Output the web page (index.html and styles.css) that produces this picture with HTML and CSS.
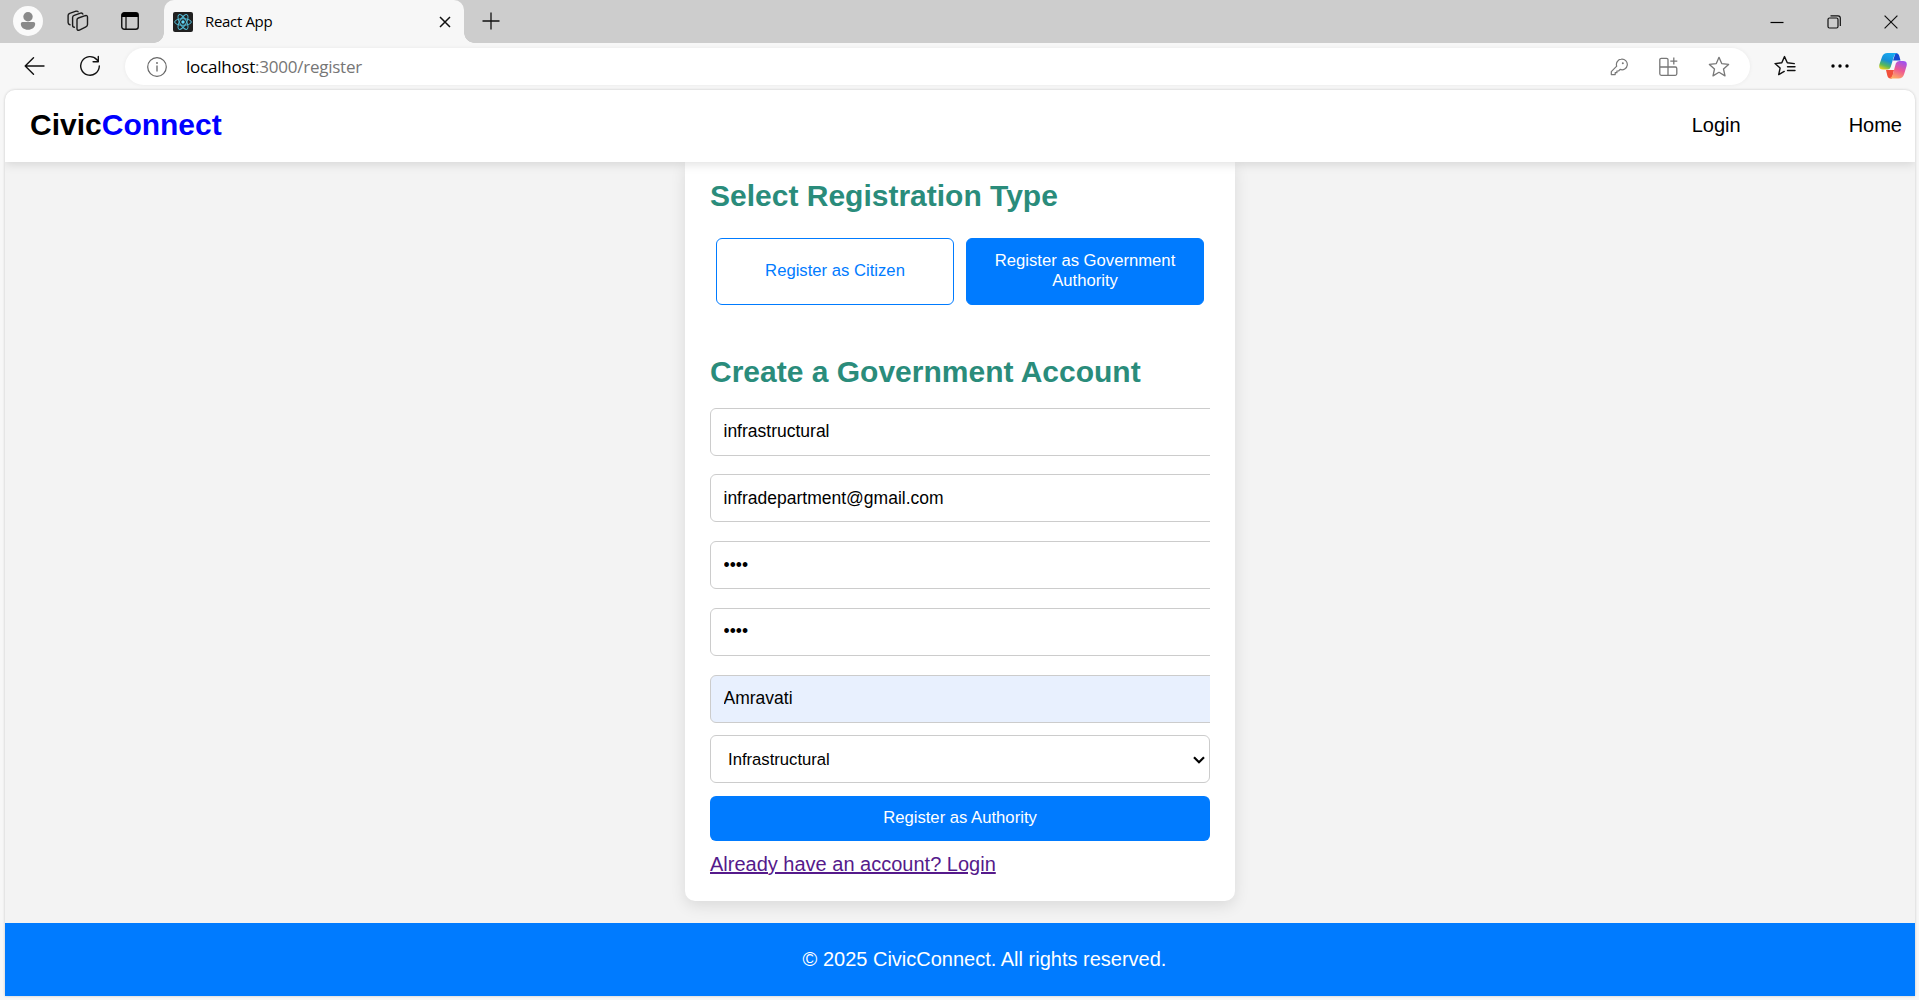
FILE: index.html
```html
<!DOCTYPE html>
<html lang="en">
<head>
<meta charset="utf-8">
<title>React App</title>
<link rel="stylesheet" href="styles.css">
</head>
<body>
<div class="browser">
  <div class="tabstrip">
    <span class="avatar"><svg width="30" height="30" viewBox="0 0 30 30"><circle cx="15" cy="15" r="15" fill="#fafafa"/><circle cx="15" cy="10.8" r="4.7" fill="#8a8a8a"/><path d="M9.600 16h10.800a1.800 1.800 0 0 1 1.800 1.800c0 3.800-3.200 6-7.200 6s-7.200-2.200-7.200-6a1.800 1.800 0 0 1 1.800-1.800z" fill="#8a8a8a"/></svg></span>
    <svg class="workspaces" width="22" height="22" viewBox="0 0 22 22" fill="none" stroke="#1c1c1c" stroke-width="1.400" stroke-linejoin="round" stroke-linecap="round"><path d="M11.400 8l6.800-2.300q2.300-.6 2.300 1.600v7.200q0 1.700-1.600 2.300l-6.500 3.300q-2.400.8-2.400-1.400V9.800q0-1.300 1.400-1.800z"/><path d="M7.400 17.200q-1.800 0-1.800-2V7.600q0-1.600 1.600-2.200l6.300-2.200q1.800-.5 2.300.9M3 14.800q-1.900-.4-1.900-2.200V5.600q0-1.700 1.600-2.300L9 1.200q1.600-.4 2.100.6"/></svg>
    <svg class="tabactions" width="18" height="18" viewBox="0 0 18 18"><rect x=".75" y=".75" width="16.500" height="16.500" rx="2.500" fill="none" stroke="#111" stroke-width="1.400"/><path d="M.7 5V3A2.500 2.500 0 0 1 3.200.5h11.600A2.500 2.500 0 0 1 17.300 3v2z" fill="#000"/><path d="M5 5v12" stroke="#111" stroke-width="1.300"/></svg>
    <div class="tab">
      <svg width="20" height="20" viewBox="0 0 20 20"><rect width="20" height="20" rx="2" fill="#202020"/><g fill="none" stroke="#53b9d3" stroke-width="1"><ellipse cx="10" cy="10" rx="8.300" ry="3.300"/><ellipse cx="10" cy="10" rx="8.300" ry="3.300" transform="rotate(60 10 10)"/><ellipse cx="10" cy="10" rx="8.300" ry="3.300" transform="rotate(120 10 10)"/></g><circle cx="10" cy="10" r="1.700" fill="#61dafb"/></svg>
      <span class="tab-title">React App</span>
      <svg class="tab-close" width="12" height="12" viewBox="0 0 12 12" stroke="#111" stroke-width="1.500"><path d="M1 1l10 10M11 1L1 11"/></svg>
    </div>
    <svg class="newtab" width="18" height="18" viewBox="0 0 18 18" stroke="#111" stroke-width="1.300"><path d="M9 .5v17M.5 9h17"/></svg>
    <div class="window-buttons">
      <svg width="14" height="14" viewBox="0 0 14 14"><path d="M.5 7.500h13" stroke="#000" stroke-width="1.200"/></svg>
      <svg width="14" height="14" viewBox="0 0 14 14" fill="none" stroke="#111" stroke-width="1.200"><rect x="1" y="3" width="10" height="10" rx="1.500"/><path d="M3.500.8H11a2.300 2.300 0 0 1 2.300 2.300V11"/></svg>
      <svg width="14" height="14" viewBox="0 0 14 14" stroke="#111" stroke-width="1.200"><path d="M.6.6l12.800 12.800M13.400.6L.6 13.400"/></svg>
    </div>
  </div>
  <div class="toolbar">
    <svg class="back" width="21" height="18" viewBox="0 0 21 18" fill="none" stroke="#111" stroke-width="1.400" stroke-linecap="round" stroke-linejoin="round"><path d="M20 9H1.200M9.500.8L1.200 9l8.300 8.200"/></svg>
    <svg class="reload" width="22" height="22" viewBox="0 0 22 22" fill="none" stroke="#111" stroke-width="1.400" stroke-linecap="round" stroke-linejoin="round"><path d="M20.300 11A9.300 9.300 0 1 1 17.900 4.700L19.300 6.200M19.300 1.500v5.200h-5.200"/></svg>
    <div class="address">
      <svg width="20" height="20" viewBox="0 0 20 20" fill="none" stroke="#666"><circle cx="10" cy="10" r="9.300" stroke-width="1.200"/><path d="M10 8.500v6" stroke-width="1.300"/><circle cx="10" cy="6" r=".9" fill="#666" stroke="none"/></svg>
      <span class="url"><b>localhost</b>:3000/register</span>
      <div class="address-icons">
        <svg width="18" height="18" viewBox="0 0 18 18" fill="none" stroke="#777" stroke-width="1.200" stroke-linejoin="round"><path d="M11.300 1.200a5.300 5.300 0 1 1-1.200 10.200L8.600 13H6.900v1.700H5.200v1.900H1.300v-2.900l5.400-5.500a5.300 5.300 0 0 1 4.600-7z"/><circle cx="12.800" cy="5.200" r="1" fill="#777" stroke="none"/></svg>
        <svg width="20" height="20" viewBox="0 0 20 20" fill="none" stroke="#777" stroke-width="1.300"><path d="M10 10V2.800a1.500 1.500 0 0 0-1.500-1.500H3.300a1.500 1.500 0 0 0-1.500 1.500V16.800a1.500 1.500 0 0 0 1.500 1.500h14a1.500 1.500 0 0 0 1.500-1.500V11.500A1.500 1.500 0 0 0 17.300 10H1.800M10 10v8.300M15.800.6v7M12.300 4.100h7"/></svg>
        <svg width="22" height="22" viewBox="0 0 22 22" fill="none" stroke="#777" stroke-width="1.300" stroke-linejoin="round"><path d="M11 1.300l2.700 6.300 6.900.8-5.100 4.600 1.500 6.900L11 16.300l-6 3.600 1.500-6.900-5.100-4.600 6.900-.8z"/></svg>
      </div>
    </div>
    <svg class="favorites" width="22" height="22" viewBox="0 0 22 22" fill="none" stroke="#111" stroke-width="1.400" stroke-linejoin="round" stroke-linecap="round"><path d="M20.300 8.600l-7-.8L10.500 1.600 7.800 7.800 1 8.600l5.100 4.500-1.400 6.500 5.500-3.200M13.500 11.700h7.500M13.500 15.500h7.500"/></svg>
    <svg class="more" width="18" height="4" viewBox="0 0 18 4"><circle cx="2" cy="2" r="1.700"/><circle cx="9" cy="2" r="1.700"/><circle cx="16" cy="2" r="1.700"/></svg>
    <svg class="copilot" width="28" height="26" viewBox="0 0 28 26">
      <defs>
        <linearGradient id="cool" x1=".6" y1="0" x2=".2" y2="1"><stop offset="0" stop-color="#18a9f0"/><stop offset=".45" stop-color="#1690d8"/><stop offset=".75" stop-color="#58b95a"/><stop offset="1" stop-color="#f2cf1b"/></linearGradient>
        <linearGradient id="warm" x1=".7" y1="0" x2=".3" y2="1"><stop offset="0" stop-color="#a052ee"/><stop offset=".5" stop-color="#ee5a91"/><stop offset="1" stop-color="#ffad62"/></linearGradient>
      </defs>
      <path d="M16.500 0q3 0 3.800 3l1.200 4.500H14z" fill="#1748cf"/>
      <path d="M7 17h8l-2 8.500h-1.500q-2.500 0-3.200-3z" fill="#f1503b"/>
      <path d="M8.500 0H18q-2.500 1-3.300 4l-3 10q-.8 2.500-3.400 2.500H4Q-.7 16.500.4 11.500L3 4q1.300-4 5.500-4z" fill="url(#cool)"/>
      <path d="M19.500 25.500H10.500q2.500-1 3.300-4l3-11q.8-2.500 3.400-2.500H24q4.700 0 3.600 5L25 21.500q-1.300 4-5.500 4z" fill="url(#warm)"/>
    </svg>
  </div>
  <div class="viewport">
    <header class="site-header">
      <div class="logo">Civic<span>Connect</span></div>
      <nav><a>Login</a><a>Home</a></nav>
    </header>
    <main>
      <section class="card">
        <h2>Select Registration Type</h2>
        <div class="types">
          <button class="type">Register as Citizen</button>
          <button class="type active">Register as Government Authority</button>
        </div>
        <h2 class="form-title">Create a Government Account</h2>
        <form>
          <input type="text" value="infrastructural">
          <input type="text" class="email" value="infradepartment@gmail.com">
          <input type="password" class="password" value="abcd">
          <input type="password" value="abcd">
          <input type="text" class="autofilled" value="Amravati">
          <div class="select"><span>Infrastructural</span><svg width="12" height="8" viewBox="0 0 12 8" fill="none" stroke="#000" stroke-width="2.200"><path d="M1 1.200l5 5 5-5"/></svg></div>
          <button class="submit">Register as Authority</button>
        </form>
        <a class="login-link">Already have an account? Login</a>
      </section>
    </main>
    <footer>© 2025 CivicConnect. All rights reserved.</footer>
  </div>
</div>
</body>
</html>
```
FILE: styles.css
```css
* { box-sizing: border-box; }
body { margin: 0; font: 20px "Liberation Sans", Arial, sans-serif; color: #000; }
svg { display: block; flex: none; }
button, input { font-family: inherit; }

.browser { width: 1919px; height: 1000px; background: #f7f7f7; display: flex; flex-direction: column; overflow: hidden; }

/* Tab strip */
.tabstrip { height: 43px; flex: none; background: #cdcdcd; display: flex; align-items: center; padding-left: 13px; }
.avatar { margin-top: -1px; }
.workspaces { margin: -1px 0 0 24px; }
.tabactions { margin: -1px 0 0 32px; }
.tab { position: relative; width: 300px; height: 43px; margin-left: 25px; padding: 1px 13px 0 9px; background: #f7f7f7; border-radius: 10px 10px 0 0; display: flex; align-items: center; }
.tab::before, .tab::after { content: ""; position: absolute; bottom: 0; width: 10px; height: 10px; }
.tab::before { left: -10px; background: radial-gradient(circle at 0 0, transparent 9.500px, #f7f7f7 10px); }
.tab::after { right: -10px; background: radial-gradient(circle at 100% 0, transparent 9.500px, #f7f7f7 10px); }
.tab-title { margin-left: 12px; padding-bottom: 3px; font: 15px "Open Sans", sans-serif; letter-spacing: -0.330px; }
.tab-close { margin-left: auto; }
.newtab { margin-left: 18px; margin-top: -2px; }
.window-buttons { margin: 0 21px 0 auto; display: flex; gap: 43px; }

/* Toolbar */
.toolbar { height: 47px; flex: none; display: flex; align-items: center; padding: 0 12px 2px 24px; }
.reload { margin-left: 34px; }
.address { width: 1625px; height: 37px; margin: 2px 0 0 24px; padding: 1px 20px 0 22px; border-radius: 19px; background: #fff; box-shadow: 0 0 4px rgba(0, 0, 0, .06); display: flex; align-items: center; }
.url { margin-left: 19px; padding-bottom: 2px; font: 17px "Open Sans", sans-serif; letter-spacing: -0.240px; color: #767676; }
.url b { color: #000; font-weight: 400; }
.address-icons { margin-left: auto; display: flex; align-items: center; gap: 30px; }
.favorites { margin-left: 24px; }
.more { margin-left: 35px; }
.copilot { margin-left: auto; }

/* Page */
.viewport { width: 1910px; height: 906px; margin-left: 5px; flex: none; display: flex; flex-direction: column; background: #f3f3f3; border-radius: 10px 10px 0 0; overflow: hidden; box-shadow: 0 0 3px rgba(0, 0, 0, .2); }
.site-header { height: 72px; flex: none; position: relative; z-index: 1; background: #fff; box-shadow: 0 2px 10px rgba(0, 0, 0, .13); display: flex; align-items: center; justify-content: space-between; padding: 0 13px 2px 25px; }
.logo { font-size: 30px; font-weight: 700; }
.logo span { color: #00f; }
nav { display: flex; gap: 108px; }
main { flex: 1; display: flex; justify-content: center; }
.card { width: 550px; height: 739px; background: #fff; border-radius: 0 0 10px 10px; box-shadow: 0 5px 15px rgba(0, 0, 0, .1); padding: 16px 25px 0; }
h2 { margin: 0; font-size: 30px; line-height: 35px; color: #2a8c7b; }
.types { display: flex; gap: 12px; padding: 0 6px; margin-top: 25px; }
.type { width: 238px; height: 67px; border: 1px solid #007bff; border-radius: 6px; background: #fff; color: #007bff; font-size: 16.667px; line-height: 20px; padding: 0 20px 2px; }
.type.active { background: #007bff; color: #fff; }
.form-title { margin-top: 49px; }
form { display: flex; flex-direction: column; margin-top: 19px; overflow: hidden; }
input { width: 526px; height: 48px; margin-bottom: 19px; padding: 0 12px 2px 12.500px; border: 1px solid #ccc; border-radius: 6px; font-size: 17.500px; }
input:first-child { margin-bottom: 18px; }
.email, .password { padding-bottom: 0; }
.autofilled { background: #e8f0fe; margin-bottom: 12px; }
.select { height: 48px; border: 1px solid #ccc; border-radius: 6px; padding: 1px 4px 0 17px; display: flex; align-items: center; justify-content: space-between; font-size: 16.667px; }
.submit { height: 45px; margin-top: 13px; padding: 0 0 2px; border: 0; border-radius: 6px; background: #007bff; color: #fff; font-size: 16.667px; }
.login-link { display: block; margin-top: 12px; line-height: 23px; color: #551a8b; text-decoration: underline; }
footer { height: 73px; flex: none; background: #007bff; color: #fff; display: flex; align-items: center; justify-content: center; padding: 0 0 1px 49px; }
```
